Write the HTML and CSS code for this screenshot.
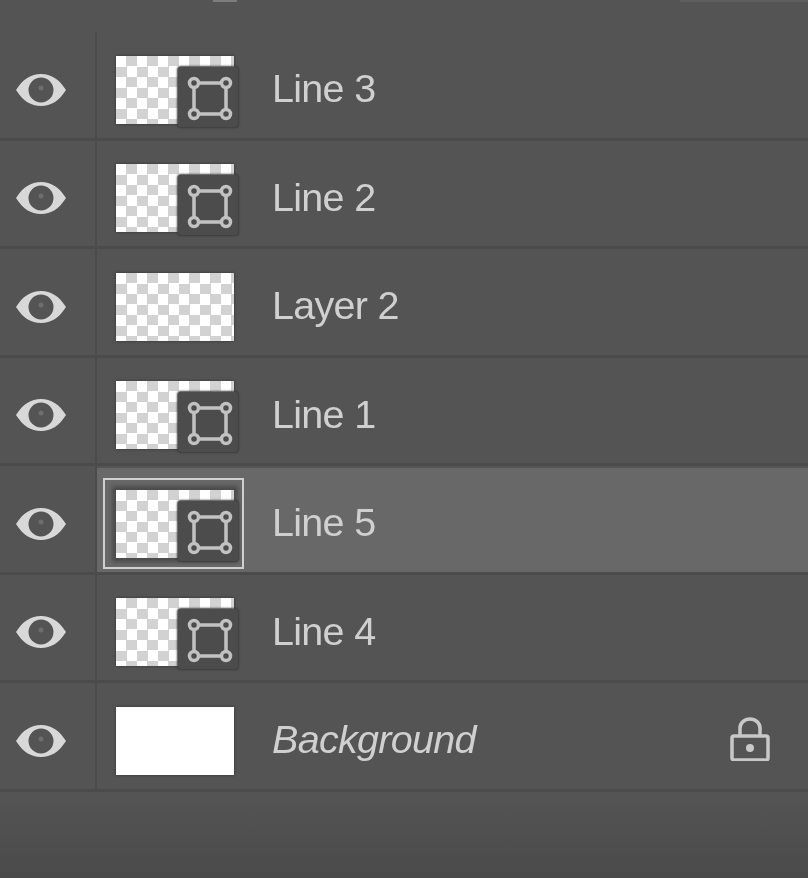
FILE: index.html
```html
<!DOCTYPE html>
<html lang="en">

  <head>
    <meta charset="UTF-8">
    <meta name="viewport" content="width=device-width, initial-scale=1.0">
    <title>Layers</title>
    <link rel="stylesheet" href="styles.css">
  </head>

  <body>
    <svg width="0" height="0" class="defs">
      <symbol id="eye" viewBox="0 0 52 34">
        <path fill-rule="evenodd" d="M1 17C8 6 16 1 26 1s18 5 25 16c-7 11-15 16-25 16S8 28 1 17zM26 4.500a12.500 12.500 0 1 0 0 25 12.500 12.500 0 0 0 0-25z"/>
        <circle cx="26" cy="15" r="2.500" opacity="0.2"/>
      </symbol>
      <symbol id="shape" viewBox="0 0 60 60">
        <g fill="none" stroke="#c2c2c2" stroke-width="3.500">
          <path d="M16 21V42M20 47H43M48 42V21M43 16H20"/>
          <circle cx="16" cy="16" r="4.500"/>
          <circle cx="48" cy="16" r="4.500"/>
          <circle cx="16" cy="47" r="4.500"/>
          <circle cx="48" cy="47" r="4.500"/>
        </g>
      </symbol>
    </svg>

    <div class="panel">
      <div class="top-strip">
        <span class="knob"></span>
        <span class="bar"></span>
      </div>
      <div class="row">
        <div class="eye-cell"><svg class="eye"><use href="#eye"/></svg></div>
        <div class="thumb-cell"><div class="thumb"><div class="shape-badge"><svg><use href="#shape"/></svg></div></div></div>
        <div class="name">Line 3</div>
      </div>
      <div class="row">
        <div class="eye-cell"><svg class="eye"><use href="#eye"/></svg></div>
        <div class="thumb-cell"><div class="thumb"><div class="shape-badge"><svg><use href="#shape"/></svg></div></div></div>
        <div class="name">Line 2</div>
      </div>
      <div class="row">
        <div class="eye-cell"><svg class="eye"><use href="#eye"/></svg></div>
        <div class="thumb-cell"><div class="thumb"></div></div>
        <div class="name">Layer 2</div>
      </div>
      <div class="row">
        <div class="eye-cell"><svg class="eye"><use href="#eye"/></svg></div>
        <div class="thumb-cell"><div class="thumb"><div class="shape-badge"><svg><use href="#shape"/></svg></div></div></div>
        <div class="name">Line 1</div>
      </div>
      <div class="row selected">
        <div class="eye-cell"><svg class="eye"><use href="#eye"/></svg></div>
        <div class="thumb-cell"><div class="thumb"><div class="shape-badge"><svg><use href="#shape"/></svg></div></div></div>
        <div class="name">Line 5</div>
      </div>
      <div class="row">
        <div class="eye-cell"><svg class="eye"><use href="#eye"/></svg></div>
        <div class="thumb-cell"><div class="thumb"><div class="shape-badge"><svg><use href="#shape"/></svg></div></div></div>
        <div class="name">Line 4</div>
      </div>
      <div class="row">
        <div class="eye-cell"><svg class="eye"><use href="#eye"/></svg></div>
        <div class="thumb-cell"><div class="thumb white"></div></div>
        <div class="name italic">Background</div>
        <svg class="lock" viewBox="0 0 40 44">
          <path fill="none" stroke="#c8c8c8" stroke-width="3.500" d="M10 19V11a10 9 0 0 1 20 0v8M2 21a2 2 0 0 1 2-2h32a2 2 0 0 1 2 2v20a2 2 0 0 1-2 2H4a2 2 0 0 1-2-2z"/>
          <circle cx="20" cy="31" r="4" fill="#c8c8c8"/>
        </svg>
      </div>
    </div>
  </body>

</html>
```

FILE: styles.css
```css
:root {
  --panel-bg: #545454;
  --selected-bg: #686868;
  --line: #4b4b4b;
  --text: #d0d0d0;
}

html,
body {
  height: 100%;
}

body {
  margin: 0;
  overflow: hidden;
  background: linear-gradient(var(--panel-bg) 0, var(--panel-bg) 795px, #4a4a4a 878px);
  color: var(--text);
  font-family: "Liberation Sans", Arial, sans-serif;
}

.defs {
  display: block;
}

/* the reference is an upscaled capture, so icons and text are a little soft */
.eye,
.name,
.lock,
.shape-badge svg {
  filter: blur(0.7px);
}

.top-strip {
  display: flex;
  align-items: flex-start;
  height: 32px;
}

.knob {
  width: 24px;
  height: 2px;
  margin-left: 213px;
  background-color: #7c7c7c;
}

.bar {
  width: 128px;
  height: 2px;
  margin-left: auto;
  background-color: #5e5e5e;
}

.row {
  display: flex;
  align-items: center;
  height: 108.5px;
  box-sizing: border-box;
  border-bottom: 3px solid var(--line);
}

.row.selected {
  background: linear-gradient(var(--selected-bg), var(--selected-bg)) 97px 2px no-repeat;
}

.eye-cell {
  display: flex;
  align-items: center;
  justify-content: center;
  align-self: stretch;
  flex: none;
  width: 97px;
  padding: 10px 14px 0 0;
  box-sizing: border-box;
  border-right: 2px solid var(--line);
}

.eye {
  width: 52px;
  height: 34px;
  fill: #d8d8d8;
}

.thumb-cell {
  flex: none;
  width: 175px;
  margin-top: 10px;
  padding-left: 19px;
  box-sizing: border-box;
}

.thumb {
  position: relative;
  width: 118px;
  height: 68px;
  background-color: #fff;
  background-image: conic-gradient(#d2d2d2 25%, #fff 0 50%, #d2d2d2 0 75%, #fff 0);
  background-size: 21px 21px;
  box-shadow: 0 0 3px rgba(0, 0, 0, 0.4);
}

.thumb.white {
  background: #fff;
}

.selected .thumb {
  box-shadow: 0 0 4px 4px rgba(0, 0, 0, 0.28);
}

.selected .thumb::after {
  content: "";
  position: absolute;
  left: -13px;
  right: -10px;
  top: -12px;
  bottom: -11px;
  border: 2px solid #cfcfcf;
}

.shape-badge {
  position: absolute;
  left: 62px;
  top: 11px;
  width: 60px;
  height: 60px;
  border-radius: 3px;
  background-color: #4c4c4c;
  box-shadow: 0 0 2px 1px #3c3c3c;
}

.shape-badge svg {
  display: block;
  width: 60px;
  height: 60px;
}

.name {
  margin-top: 7px;
  font-size: 39.5px;
  line-height: 46px;
  letter-spacing: -0.7px;
}

.italic {
  font-style: italic;
}

.lock {
  flex: none;
  width: 40px;
  height: 44px;
  margin: 6px 38px 0 auto;
}
```
